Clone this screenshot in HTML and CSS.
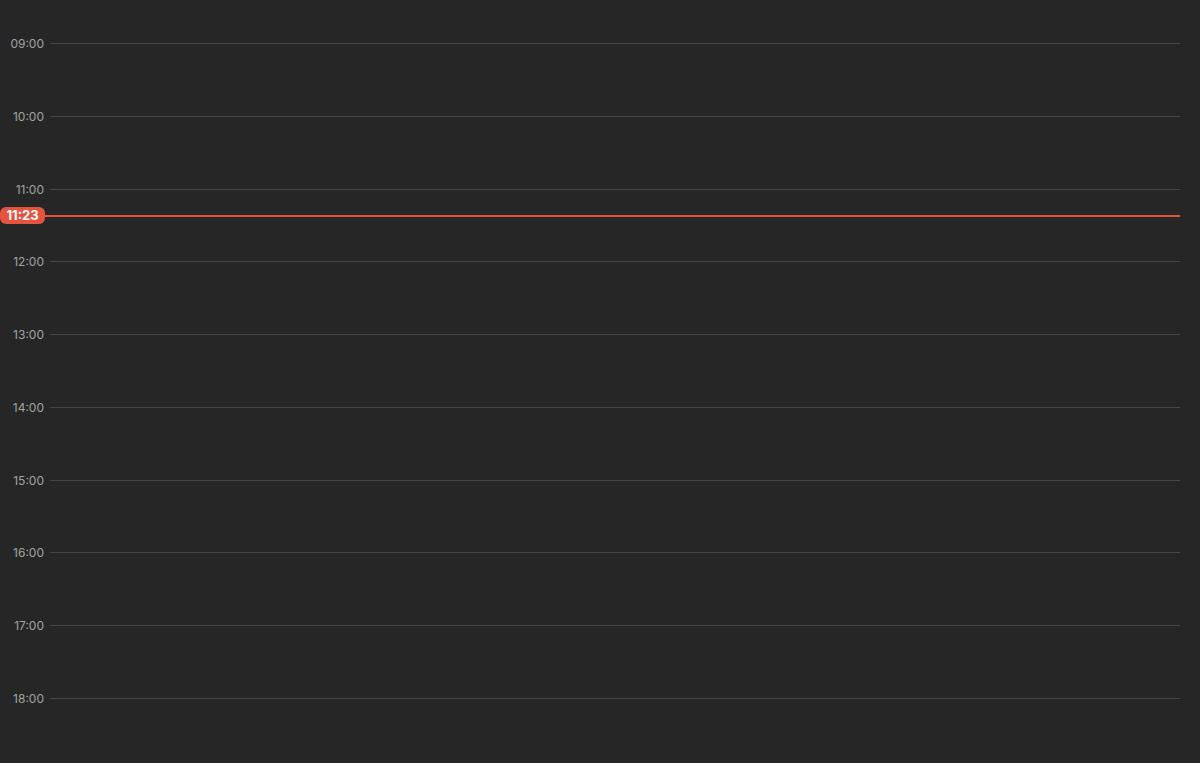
FILE: index.html
```html
<!DOCTYPE html>
<html>
<head>
<meta charset="utf-8">
<link rel="stylesheet" href="styles.css">
</head>
<body>
<div class="timeline">
  <div class="hour"><div class="mark"><span class="label">09:00</span><span class="rule"></span></div></div>
  <div class="hour"><div class="mark"><span class="label">10:00</span><span class="rule"></span></div></div>
  <div class="hour"><div class="mark"><span class="label">11:00</span><span class="rule"></span></div></div>
  <div class="hour"><div class="mark"><span class="label">12:00</span><span class="rule"></span></div></div>
  <div class="hour"><div class="mark"><span class="label">13:00</span><span class="rule"></span></div></div>
  <div class="hour"><div class="mark"><span class="label">14:00</span><span class="rule"></span></div></div>
  <div class="hour"><div class="mark"><span class="label">15:00</span><span class="rule"></span></div></div>
  <div class="hour"><div class="mark"><span class="label">16:00</span><span class="rule"></span></div></div>
  <div class="hour"><div class="mark"><span class="label">17:00</span><span class="rule"></span></div></div>
  <div class="hour"><div class="mark"><span class="label">18:00</span><span class="rule"></span></div></div>
  <div class="now"><span class="now-badge">11:23</span><span class="now-rule"></span></div>
</div>
</body>
</html>
```

FILE: styles.css
```css
html, body {
  margin: 0;
  padding: 0;
  background: #262626;
  width: 1200px;
  height: 763px;
  overflow: hidden;
}
.timeline {
  position: relative;
  padding-top: 43px;
  font-family: Inter, "Liberation Sans", sans-serif;
}
.hour {
  height: 72.78px;
}
.mark {
  display: flex;
  align-items: center;
  height: 1px;
}
.label {
  width: 44px;
  text-align: right;
  font-size: 12px;
  color: #a3a3a3;
  flex: none;
}
.rule {
  flex: 1;
  height: 1px;
  background: #454545;
  margin-left: 6px;
  margin-right: 20px;
}
.now {
  position: absolute;
  left: 0;
  right: 20px;
  top: 207px;
  height: 17px;
  display: flex;
  align-items: center;
}
.now-badge {
  flex: none;
  width: 45px;
  height: 17px;
  line-height: 17px;
  border-radius: 6px;
  background: #e5533f;
  color: #fff;
  font-weight: 700;
  font-size: 13px;
  text-align: center;
}
.now-rule {
  flex: 1;
  height: 2px;
  background: #e5533f;
}
```
